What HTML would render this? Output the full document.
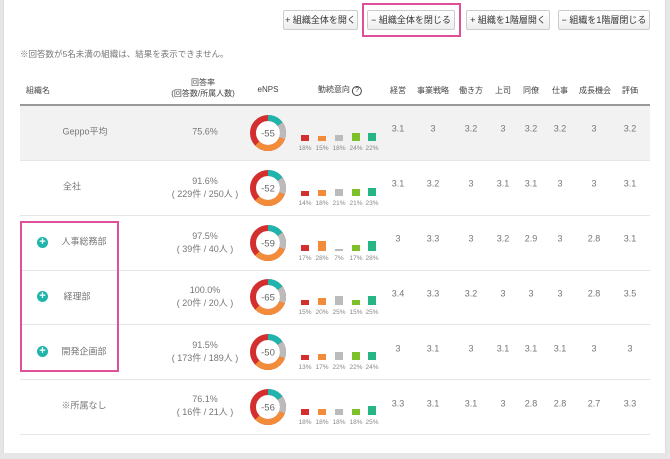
<!DOCTYPE html>
<html><head><meta charset="utf-8"><style>
*{margin:0;padding:0;box-sizing:border-box}
body{width:670px;height:459px;background:#e6e6e6;font-family:"Liberation Sans","Noto Sans CJK JP",sans-serif;color:#555;position:relative;overflow:hidden}
.panel{position:absolute;left:3px;top:0;width:663px;height:453px;background:#fff;border-left:1px solid #ddd;border-right:1px solid #ddd}
.a{position:absolute;white-space:nowrap}
.btn{position:absolute;top:10px;height:20px;border:1px solid #ccc;border-radius:2px;background:linear-gradient(#fff,#eee);font-size:9px;color:#333;text-align:center;line-height:18px}
.hd{font-size:8px;color:#444;position:absolute;text-align:center;transform:translateX(-50%);white-space:nowrap}
.c{position:absolute;transform:translate(-50%,-50%);font-size:9px;color:#777;text-align:center;white-space:nowrap;line-height:13px}
.line{position:absolute;left:20px;width:630px;height:1px;background:#e6e6e6}
.plus{position:absolute;width:11px;height:11px;border-radius:50%;background:#1fb5ad;color:#fff;font-size:11px;font-weight:bold;line-height:11px;text-align:center}
</style></head><body>
<div class="panel"></div>
<div class="btn" style="left:283px;width:75px">+ 組織全体を開く</div>
<div class="btn" style="left:367px;width:88px">− 組織全体を閉じる</div>
<div style="position:absolute;left:362px;top:3px;width:99px;height:34px;border:2px solid #e0509a"></div>
<div class="btn" style="left:466px;width:84px">+ 組織を1階層開く</div>
<div class="btn" style="left:558px;width:92px">− 組織を1階層閉じる</div>
<div class="a" style="left:20px;top:48px;font-size:8.5px;color:#777">※回答数が5名未満の組織は、結果を表示できません。</div>

<div class="a" style="left:26px;top:85px;font-size:8px;color:#444">組織名</div>
<div class="hd" style="left:203px;top:77px;line-height:11px">回答率<br>(回答数/所属人数)</div>
<div class="hd" style="left:268px;top:85px">eNPS</div>
<div class="hd" style="left:340px;top:84px">勤続意向 <span style="display:inline-block;width:10px;height:10px;border:1px solid #444;border-radius:50%;font-size:7px;line-height:8px">?</span></div>
<div class="hd" style="left:398px;top:85px">経営</div>
<div class="hd" style="left:433px;top:85px">事業戦略</div>
<div class="hd" style="left:471px;top:85px">働き方</div>
<div class="hd" style="left:503px;top:85px">上司</div>
<div class="hd" style="left:531px;top:85px">同僚</div>
<div class="hd" style="left:560px;top:85px">仕事</div>
<div class="hd" style="left:595px;top:85px">成長機会</div>
<div class="hd" style="left:630px;top:85px">評価</div>
<div class="line" style="top:104px;height:2px;background:#999"></div>
<div style="position:absolute;left:20px;top:106px;width:630px;height:54px;background:#f2f2f2"></div>
<div class="line" style="top:160px"></div>
<div class="line" style="top:215px"></div>
<div class="line" style="top:270px"></div>
<div class="line" style="top:324px"></div>
<div class="line" style="top:379px"></div>
<div class="line" style="top:434px"></div>
<div style="position:absolute;left:20px;top:221px;width:99px;height:151px;border:2px solid #e0509a"></div>
<div class="plus" style="left:37px;top:237px">+</div>
<div class="plus" style="left:37px;top:291px">+</div>
<div class="plus" style="left:37px;top:346px">+</div>

<svg width="670" height="459" style="position:absolute;left:0;top:0" font-family="Liberation Sans" font-size="9.5" fill="#666">
<defs>
<g id="d">
<circle r="15" fill="#fff" stroke="#d32f2f" stroke-width="6"/>
<circle r="15" fill="none" stroke="#1fb5ad" stroke-width="6" stroke-dasharray="14 81" transform="rotate(-90)"/>
<circle r="15" fill="none" stroke="#bbb" stroke-width="6" stroke-dasharray="0 14 15 70" transform="rotate(-90)"/>
<circle r="15" fill="none" stroke="#f28c3a" stroke-width="6" stroke-dasharray="0 29 30 40" transform="rotate(-90)"/>
</g>
</defs>
<use href="#d" x="268" y="133"/><text x="268" y="136.5" text-anchor="middle">-55</text>
<use href="#d" x="268" y="188"/><text x="268" y="191.5" text-anchor="middle">-52</text>
<use href="#d" x="268" y="243"/><text x="268" y="246.5" text-anchor="middle">-59</text>
<use href="#d" x="268" y="297"/><text x="268" y="300.5" text-anchor="middle">-65</text>
<use href="#d" x="268" y="352"/><text x="268" y="355.5" text-anchor="middle">-50</text>
<use href="#d" x="268" y="407"/><text x="268" y="410.5" text-anchor="middle">-56</text>
</svg>

<div class="c" style="left:85px;top:132px">Geppo平均</div><div class="c" style="left:205px;top:132px">75.6%</div>
<div class="c" style="left:72px;top:187px">全社</div><div class="c" style="left:205px;top:188px">91.6%<br>( 229件 / 250人 )</div>
<div class="c" style="left:84px;top:242px">人事総務部</div><div class="c" style="left:205px;top:243px">97.5%<br>( 39件 / 40人 )</div>
<div class="c" style="left:77px;top:297px">経理部</div><div class="c" style="left:205px;top:297px">100.0%<br>( 20件 / 20人 )</div>
<div class="c" style="left:84px;top:352px">開発企画部</div><div class="c" style="left:205px;top:352px">91.5%<br>( 173件 / 189人 )</div>
<div class="c" style="left:84px;top:406px">※所属なし</div><div class="c" style="left:205px;top:406px">76.1%<br>( 16件 / 21人 )</div>

<div class="c" style="left:398px;top:129px">3.1</div><div class="c" style="left:433px;top:129px">3</div><div class="c" style="left:471px;top:129px">3.2</div><div class="c" style="left:503px;top:129px">3</div><div class="c" style="left:531px;top:129px">3.2</div><div class="c" style="left:560px;top:129px">3.2</div><div class="c" style="left:594px;top:129px">3</div><div class="c" style="left:630px;top:129px">3.2</div>
<div class="c" style="left:398px;top:184px">3.1</div><div class="c" style="left:433px;top:184px">3.2</div><div class="c" style="left:471px;top:184px">3</div><div class="c" style="left:503px;top:184px">3.1</div><div class="c" style="left:531px;top:184px">3.1</div><div class="c" style="left:560px;top:184px">3</div><div class="c" style="left:594px;top:184px">3</div><div class="c" style="left:630px;top:184px">3.1</div>
<div class="c" style="left:398px;top:239px">3</div><div class="c" style="left:433px;top:239px">3.3</div><div class="c" style="left:471px;top:239px">3</div><div class="c" style="left:503px;top:239px">3.2</div><div class="c" style="left:531px;top:239px">2.9</div><div class="c" style="left:560px;top:239px">3</div><div class="c" style="left:594px;top:239px">2.8</div><div class="c" style="left:630px;top:239px">3.1</div>
<div class="c" style="left:398px;top:294px">3.4</div><div class="c" style="left:433px;top:294px">3.3</div><div class="c" style="left:471px;top:294px">3.2</div><div class="c" style="left:503px;top:294px">3</div><div class="c" style="left:531px;top:294px">3</div><div class="c" style="left:560px;top:294px">3</div><div class="c" style="left:594px;top:294px">2.8</div><div class="c" style="left:630px;top:294px">3.5</div>
<div class="c" style="left:398px;top:349px">3</div><div class="c" style="left:433px;top:349px">3.1</div><div class="c" style="left:471px;top:349px">3</div><div class="c" style="left:503px;top:349px">3.1</div><div class="c" style="left:531px;top:349px">3.1</div><div class="c" style="left:560px;top:349px">3.1</div><div class="c" style="left:594px;top:349px">3</div><div class="c" style="left:630px;top:349px">3</div>
<div class="c" style="left:398px;top:404px">3.3</div><div class="c" style="left:433px;top:404px">3.1</div><div class="c" style="left:471px;top:404px">3.1</div><div class="c" style="left:503px;top:404px">3</div><div class="c" style="left:531px;top:404px">2.8</div><div class="c" style="left:560px;top:404px">2.8</div><div class="c" style="left:594px;top:404px">2.7</div><div class="c" style="left:630px;top:404px">3.3</div>

<svg width="670" height="459" style="position:absolute;left:0;top:0" font-family="Liberation Sans" font-size="6.5" fill="#888" text-anchor="middle">
<g><rect x="301" y="135" width="8" height="6" fill="#d32f2f"/><rect x="318" y="136" width="8" height="5" fill="#f28c3a"/><rect x="335" y="135" width="8" height="6" fill="#bbb"/><rect x="352" y="133" width="8" height="8" fill="#7cc12a"/><rect x="368" y="133" width="8" height="8" fill="#26b585"/>
<text x="305" y="150">18%</text><text x="322" y="150">15%</text><text x="339" y="150">18%</text><text x="356" y="150">24%</text><text x="372" y="150">22%</text></g>
<g transform="translate(0,55)"><rect x="301" y="136" width="8" height="5" fill="#d32f2f"/><rect x="318" y="135" width="8" height="6" fill="#f28c3a"/><rect x="335" y="134" width="8" height="7" fill="#bbb"/><rect x="352" y="134" width="8" height="7" fill="#7cc12a"/><rect x="368" y="133" width="8" height="8" fill="#26b585"/>
<text x="305" y="150">14%</text><text x="322" y="150">18%</text><text x="339" y="150">21%</text><text x="356" y="150">21%</text><text x="372" y="150">23%</text></g>
<g transform="translate(0,110)"><rect x="301" y="135" width="8" height="6" fill="#d32f2f"/><rect x="318" y="131" width="8" height="10" fill="#f28c3a"/><rect x="335" y="139" width="8" height="2" fill="#bbb"/><rect x="352" y="135" width="8" height="6" fill="#7cc12a"/><rect x="368" y="131" width="8" height="10" fill="#26b585"/>
<text x="305" y="150">17%</text><text x="322" y="150">28%</text><text x="339" y="150">7%</text><text x="356" y="150">17%</text><text x="372" y="150">28%</text></g>
<g transform="translate(0,164)"><rect x="301" y="136" width="8" height="5" fill="#d32f2f"/><rect x="318" y="134" width="8" height="7" fill="#f28c3a"/><rect x="335" y="132" width="8" height="9" fill="#bbb"/><rect x="352" y="136" width="8" height="5" fill="#7cc12a"/><rect x="368" y="132" width="8" height="9" fill="#26b585"/>
<text x="305" y="150">15%</text><text x="322" y="150">20%</text><text x="339" y="150">25%</text><text x="356" y="150">15%</text><text x="372" y="150">25%</text></g>
<g transform="translate(0,219)"><rect x="301" y="136" width="8" height="5" fill="#d32f2f"/><rect x="318" y="135" width="8" height="6" fill="#f28c3a"/><rect x="335" y="133" width="8" height="8" fill="#bbb"/><rect x="352" y="133" width="8" height="8" fill="#7cc12a"/><rect x="368" y="133" width="8" height="8" fill="#26b585"/>
<text x="305" y="150">13%</text><text x="322" y="150">17%</text><text x="339" y="150">22%</text><text x="356" y="150">22%</text><text x="372" y="150">24%</text></g>
<g transform="translate(0,274)"><rect x="301" y="135" width="8" height="6" fill="#d32f2f"/><rect x="318" y="135" width="8" height="6" fill="#f28c3a"/><rect x="335" y="135" width="8" height="6" fill="#bbb"/><rect x="352" y="135" width="8" height="6" fill="#7cc12a"/><rect x="368" y="132" width="8" height="9" fill="#26b585"/>
<text x="305" y="150">18%</text><text x="322" y="150">18%</text><text x="339" y="150">18%</text><text x="356" y="150">18%</text><text x="372" y="150">25%</text></g>
</svg>
</body></html>
